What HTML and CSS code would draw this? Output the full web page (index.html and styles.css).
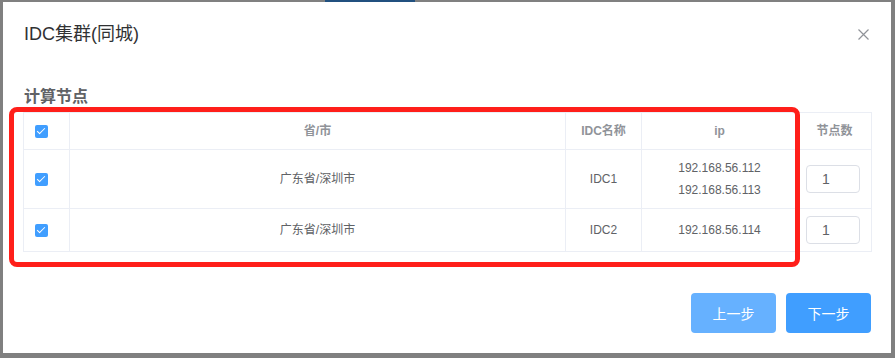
FILE: index.html
```html
<!DOCTYPE html>
<html>
<head>
    <meta charset="utf-8" />
    <title>IDC集群(同城)</title>
    <link rel="stylesheet" href="styles.css">
</head>
<body>
    <div class="backdrop-strip"><span class="under-tab"></span></div>
    <div class="dialog">
        <div class="dialog-header">
            <span class="dialog-title">IDC集群(同城)</span>
            <button class="dialog-close">
                <svg width="11" height="11" viewBox="0 0 11 11"><path d="M0.5 0.5L10.5 10.5M10.5 0.5L0.5 10.5" stroke="#909399" stroke-width="1.2" fill="none"/></svg>
            </button>
        </div>
        <div class="dialog-body">
            <div class="section-title">计算节点</div>
            <table class="node-table">
                <colgroup>
                    <col style="width:46px">
                    <col style="width:496px">
                    <col style="width:76px">
                    <col style="width:156px">
                    <col style="width:74px">
                </colgroup>
                <thead>
                    <tr>
                        <th class="sel"><span class="checkbox"></span></th>
                        <th>省/市</th>
                        <th>IDC名称</th>
                        <th>ip</th>
                        <th>节点数</th>
                    </tr>
                </thead>
                <tbody>
                    <tr>
                        <td class="sel"><span class="checkbox"></span></td>
                        <td>广东省/深圳市</td>
                        <td>IDC1</td>
                        <td><div>192.168.56.112</div><div>192.168.56.113</div></td>
                        <td class="num"><input class="num-input" type="text" value="1"></td>
                    </tr>
                    <tr>
                        <td class="sel"><span class="checkbox"></span></td>
                        <td>广东省/深圳市</td>
                        <td>IDC2</td>
                        <td>192.168.56.114</td>
                        <td class="num"><input class="num-input" type="text" value="1"></td>
                    </tr>
                </tbody>
            </table>
        </div>
        <div class="dialog-footer">
            <button class="btn btn-prev">上一步</button>
            <button class="btn btn-next">下一步</button>
        </div>
        <!-- 标注框 -->
        <div class="mark-box"></div>
    </div>
</body>
</html>
```

FILE: styles.css
```css
html, body {
    margin: 0;
    padding: 0;
    overflow: hidden;
}

body {
    background: #808080;
    font-family: "Liberation Sans", "Noto Sans CJK SC", sans-serif;
}

.backdrop-strip {
    height: 2px;
    display: flex;
}

    .backdrop-strip .under-tab {
        margin-left: 325px;
        width: 90px;
        background: #21507f;
    }

.dialog {
    position: relative;
    width: 888px;
    height: 351px;
    margin-left: 3px;
    background: #fff;
    box-sizing: border-box;
}

.dialog-header {
    display: flex;
    justify-content: space-between;
    align-items: flex-start;
    padding: 20px 20px 10px 21px;
}

.dialog-title {
    font-size: 18px;
    line-height: 24px;
    color: #303133;
}

.dialog-close {
    border: 0;
    background: none;
    padding: 0;
    margin: 6px 2px 0 0;
    cursor: pointer;
}

.dialog-body {
    padding: 29px 20px 0 20px;
}

.section-title {
    font-size: 16px;
    font-weight: bold;
    line-height: 24px;
    color: #606266;
    margin-bottom: 3px;
    padding-left: 1px;
}

.node-table {
    width: 848px;
    border-collapse: collapse;
    table-layout: fixed;
    font-size: 12px;
    color: #606266;
}

    .node-table th,
    .node-table td {
        border: 1px solid #ebeef5;
        padding: 7px 0;
        line-height: 22px;
        text-align: center;
        vertical-align: middle;
    }

    .node-table th {
        color: #909399;
        font-weight: 600;
        height: 22px;
    }

    .node-table .sel {
        text-align: left;
        padding-left: 11px;
    }

    .node-table .num {
        text-align: left;
        padding-left: 8px;
    }

.checkbox {
    display: inline-block;
    position: relative;
    width: 13px;
    height: 13px;
    border-radius: 2px;
    background: #409eff;
    vertical-align: middle;
}

    .checkbox::after {
        content: "";
        position: absolute;
        left: 4px;
        top: 1px;
        width: 3px;
        height: 7px;
        border: solid #fff;
        border-width: 0 1px 1px 0;
        transform: rotate(45deg);
    }

.num-input {
    width: 54px;
    height: 28px;
    box-sizing: border-box;
    border: 1px solid #dcdfe6;
    border-radius: 4px;
    padding: 0 15px;
    font-family: inherit;
    font-size: 14px;
    color: #606266;
    vertical-align: middle;
    outline: none;
}

.dialog-footer {
    display: flex;
    justify-content: flex-end;
    gap: 10px;
    padding: 41px 20px 20px;
}

.btn {
    width: 85px;
    height: 40px;
    border: 0;
    border-radius: 4px;
    color: #fff;
    font-family: inherit;
    font-size: 14px;
    cursor: pointer;
}

.btn-prev {
    background: #66b1ff;
}

.btn-next {
    background: #409eff;
}

.mark-box {
    position: absolute;
    left: 6px;
    top: 105px;
    width: 791px;
    height: 160px;
    box-sizing: border-box;
    border: 5px solid #ff1f1a;
    border-radius: 8px;
    pointer-events: none;
}
```
